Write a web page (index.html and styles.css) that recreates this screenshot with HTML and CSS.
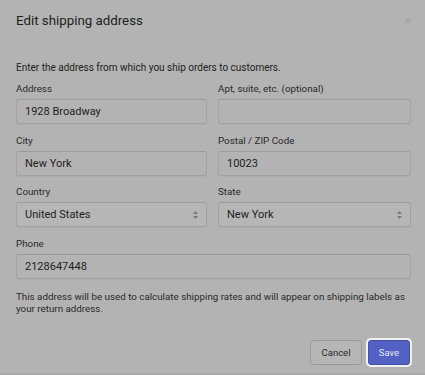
FILE: index.html
```html
<!DOCTYPE html>
<html>
<head>
<meta charset="utf-8">
<link rel="stylesheet" href="styles.css">
</head>
<body>
<div class="modal">
  <div class="header">
    <h1 class="title">Edit shipping address</h1>
    <span class="close">×</span>
  </div>
  <div class="body">
    <p class="intro">Enter the address from which you ship orders to customers.</p>
    <div class="grid">
      <div class="field">
        <label class="label">Address</label>
        <div class="input">1928 Broadway</div>
      </div>
      <div class="field">
        <label class="label">Apt, suite, etc. (optional)</label>
        <div class="input"></div>
      </div>
      <div class="field">
        <label class="label">City</label>
        <div class="input">New York</div>
      </div>
      <div class="field">
        <label class="label">Postal / ZIP Code</label>
        <div class="input">10023</div>
      </div>
      <div class="field">
        <label class="label">Country</label>
        <div class="input select">United States<span class="arrows"><svg width="5" height="8" viewBox="0 0 5 8"><path d="M2.5 0 L5 3 H0 Z M2.5 8 L0 5 H5 Z" fill="#7a7a7a"/></svg></span></div>
      </div>
      <div class="field">
        <label class="label">State</label>
        <div class="input select">New York<span class="arrows"><svg width="5" height="8" viewBox="0 0 5 8"><path d="M2.5 0 L5 3 H0 Z M2.5 8 L0 5 H5 Z" fill="#7a7a7a"/></svg></span></div>
      </div>
      <div class="field wide">
        <label class="label">Phone</label>
        <div class="input">2128647448</div>
      </div>
    </div>
    <p class="help">This address will be used to calculate shipping rates and will appear on shipping labels as your return address.</p>
  </div>
  <div class="footer">
    <button class="btn">Cancel</button>
    <button class="btn primary">Save</button>
  </div>
</div>
</body>
</html>
```
FILE: styles.css
```css
html, body {
  margin: 0;
  padding: 0;
  background: #b3b3b3;
}
body {
  font-family: Roboto, "Liberation Sans", sans-serif;
  color: #222;
  width: 425px;
  height: 375px;
  overflow: hidden;
}
.modal {
  height: 375px;
  display: flex;
  flex-direction: column;
  border-bottom: 2px solid #a8a8a8;
  box-sizing: border-box;
}
.header {
  display: flex;
  justify-content: space-between;
  align-items: center;
  padding: 13px 16px 0 16px;
  height: 16px;
}
.title {
  margin: 0;
  font-size: 13.3px;
  line-height: 16px;
  font-weight: 400;
  color: #1e1e1e;
}
.close {
  font-size: 12px;
  line-height: 16px;
  color: #a2a2a2;
  margin-right: -2px;
}
.body {
  padding: 33px 14px 0 16px;
}
.intro {
  margin: 0 0 9px 0;
  font-size: 10px;
  line-height: 12px;
  color: #222;
}
.grid {
  display: grid;
  grid-template-columns: 191px 193px;
  column-gap: 11px;
  row-gap: 10.5px;
}
.wide {
  grid-column: 1 / 3;
}
.label {
  display: block;
  font-size: 9.8px;
  line-height: 12px;
  color: #2a2a2a;
  margin-bottom: 4px;
}
.input {
  border: 1px solid #a3a3a3;
  border-top-color: #9c9c9c;
  border-radius: 3px;
  box-sizing: border-box;
  height: 25px;
  padding: 0 8px;
  font-size: 11px;
  line-height: 23px;
  color: #1e1e1e;
  display: flex;
  align-items: center;
  justify-content: space-between;
  box-shadow: 0 1px 0 rgba(0,0,0,0.04);
}
.select {
  background: #b6b6b6;
}
.arrows {
  display: flex;
  align-items: center;
}
.help {
  margin: 12px 0 0 0;
  font-size: 9.8px;
  line-height: 12px;
  color: #2a2a2a;
}
.footer {
  margin-top: auto;
  display: flex;
  justify-content: flex-end;
  gap: 6px;
  padding: 0 15px 8px 16px;
}
.btn {
  font-family: inherit;
  font-size: 9.5px;
  height: 25px;
  width: 52px;
  padding: 0;
  border: 1px solid #9a9a9a;
  border-radius: 3px;
  background: #b6b6b6;
  color: #2a2a2a;
}
.primary {
  width: 42px;
  background: #5361c4;
  color: #e6e8f5;
  border-color: #4450a8;
  box-shadow: 0 0 0 2px #f2f2f2;
}
```
